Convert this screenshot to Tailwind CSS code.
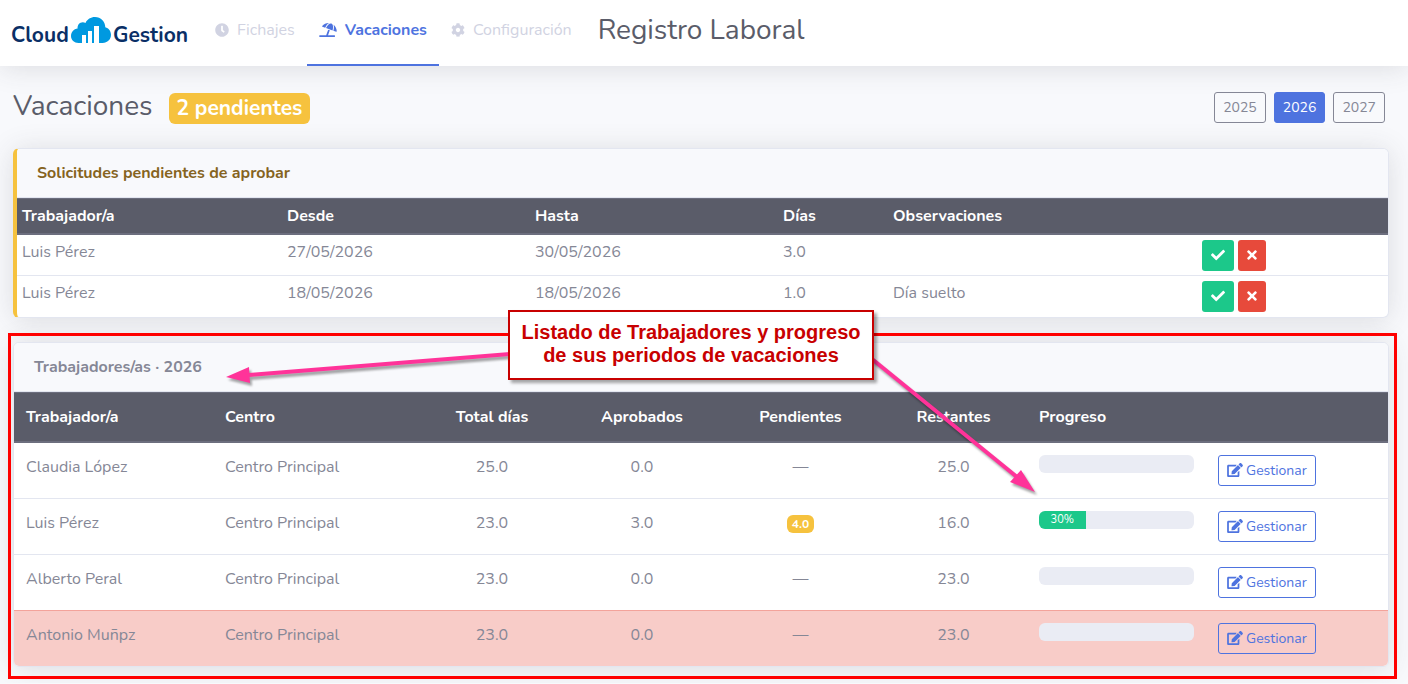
<!DOCTYPE html>
<html lang="es">
<head>
    <meta charset="UTF-8">
    <meta name="viewport" content="width=device-width, initial-scale=1.0">
    <title>Registro Laboral - Vacaciones</title>
    <script src="https://cdn.jsdelivr.net/npm/@tailwindcss/browser@4"></script>
</head>
<body class="bg-[#f8f9fc] text-[#858796] text-base font-[Nunito,Lato,sans-serif]">
    <!-- Icons -->
    <svg class="hidden">
        <symbol id="clock" viewBox="0 0 512 512"><path d="M256,8C119,8,8,119,8,256S119,504,256,504,504,393,504,256,393,8,256,8Zm92.49,313h0l-20,25a16,16,0,0,1-22.49,2.5h0l-67-49.72a40,40,0,0,1-15-31.23V112a16,16,0,0,1,16-16h32a16,16,0,0,1,16,16V256l58,42.5A16,16,0,0,1,348.49,321Z"/></symbol>
        <symbol id="beach" viewBox="0 0 640 512"><path d="M115.38 136.9l102.11 37.18c35.19-81.54 86.21-144.29 139-173.7-95.88-4.89-188.78 36.96-248.53 111.8-6.69 8.4-2.66 21.05 7.42 24.72zm132.25 48.16l238.48 86.83c35.76-121.38 18.7-231.66-42.63-253.98-7.4-2.7-15.13-4-23.09-4-58.02.01-128.27 69.17-172.76 171.15zM521.48 60.5c6.22 16.3 10.83 34.6 13.2 55.19 5.74 49.89-1.42 108.23-18.95 166.98l102.62 37.36c10.09 3.67 21.31-3.43 21.57-14.17 2.32-95.69-41.91-187.44-118.44-245.36zM560 447.98H321.06L386 269.5l-60.14-21.9-72.9 200.37H16c-8.84 0-16 7.16-16 16.01v32.01C0 504.83 7.16 512 16 512h544c8.84 0 16-7.17 16-16.01v-32.01c0-8.84-7.16-16-16-16z"/></symbol>
        <symbol id="cog" viewBox="0 0 512 512"><path d="M487.4 315.7l-42.6-24.6c4.3-23.2 4.3-47 0-70.2l42.6-24.6c4.9-2.8 7.1-8.6 5.5-14-11.1-35.6-30-67.8-54.7-94.6-3.8-4.1-10-5.1-14.8-2.3L380.8 110c-17.9-15.4-38.5-27.3-60.8-35.1V25.8c0-5.6-3.9-10.5-9.4-11.7-36.7-8.2-74.3-7.8-109.2 0-5.5 1.2-9.4 6.1-9.4 11.7V75c-22.2 7.9-42.8 19.8-60.8 35.1L88.7 85.5c-4.9-2.8-11-1.9-14.8 2.3-24.7 26.7-43.6 58.9-54.7 94.6-1.7 5.4.6 11.2 5.5 14L67.3 221c-4.3 23.2-4.3 47 0 70.2l-42.6 24.6c-4.9 2.8-7.1 8.6-5.5 14 11.1 35.6 30 67.8 54.7 94.6 3.8 4.1 10 5.1 14.8 2.3l42.6-24.6c17.9 15.4 38.5 27.3 60.8 35.1v49.2c0 5.6 3.9 10.5 9.4 11.7 36.7 8.2 74.3 7.8 109.2 0 5.5-1.2 9.4-6.1 9.4-11.7v-49.2c22.2-7.9 42.8-19.8 60.8-35.1l42.6 24.6c4.9 2.8 11 1.9 14.8-2.3 24.7-26.7 43.6-58.9 54.7-94.6 1.5-5.5-.7-11.3-5.6-14.1zM256 336c-44.1 0-80-35.9-80-80s35.9-80 80-80 80 35.9 80 80-35.9 80-80 80z"/></symbol>
        <symbol id="check" viewBox="0 0 512 512"><path d="M173.898 439.404l-166.4-166.4c-9.997-9.997-9.997-26.206 0-36.204l36.203-36.204c9.997-9.998 26.207-9.998 36.204 0L192 312.69 432.095 72.596c9.997-9.997 26.207-9.997 36.204 0l36.203 36.204c9.997 9.997 9.997 26.206 0 36.204l-294.4 294.401c-9.998 9.997-26.207 9.997-36.204-.001z"/></symbol>
        <symbol id="times" viewBox="0 0 352 512"><path d="M242.72 256l100.07-100.07c12.28-12.28 12.28-32.19 0-44.48l-22.24-22.24c-12.28-12.28-32.19-12.28-44.48 0L176 189.28 75.93 89.21c-12.28-12.28-32.19-12.28-44.48 0L9.21 111.45c-12.28 12.28-12.28 32.19 0 44.48L109.28 256 9.21 356.07c-12.28 12.28-12.28 32.19 0 44.48l22.24 22.24c12.28 12.28 32.2 12.28 44.48 0L176 322.72l100.07 100.07c12.28 12.28 32.2 12.28 44.48 0l22.24-22.24c12.28-12.28 12.28-32.19 0-44.48L242.72 256z"/></symbol>
        <symbol id="edit" viewBox="0 0 576 512"><path d="M402.6 83.2l90.2 90.2c3.8 3.8 3.8 10 0 13.8L274.4 405.6l-92.8 10.3c-12.4 1.4-22.9-9.1-21.5-21.5l10.3-92.8L388.8 83.2c3.8-3.8 10-3.8 13.8 0zm162-22.9l-48.8-48.8c-15.2-15.2-39.9-15.2-55.2 0l-35.4 35.4c-3.8 3.8-3.8 10 0 13.8l90.2 90.2c3.8 3.8 10 3.8 13.8 0l35.4-35.4c15.2-15.3 15.2-40 0-55.2zM384 346.2V448H64V128h229.8c3.2 0 6.2-1.3 8.5-3.5l40-40c7.6-7.6 2.2-20.5-8.5-20.5H48C21.5 64 0 85.5 0 112v352c0 26.5 21.5 48 48 48h352c26.5 0 48-21.5 48-48V306.2c0-10.7-12.9-16-20.5-8.5l-40 40c-2.2 2.3-3.5 5.3-3.5 8.5z"/></symbol>
    </svg>

    <header class="flex items-center bg-white pl-[11px] shadow-[0_2px_28px_rgba(58,59,69,0.15)]">
        <a href="#" class="flex items-center w-48 text-[#0a2f66] text-[21px] leading-6 font-bold">
            <span class="w-[60px] pt-1">Cloud</span>
            <svg class="w-10 h-[26px] mb-1.5" viewBox="0 0 40 26">
                <path fill="#0099e0" d="M7.500 26C3.300 26 0 22.900 0 19c0-3.900 2.800-6.900 6.600-7.400C6.200 8 8.600 5.200 11.800 5.200c1 0 1.900.2 2.700.7C16.200 2.300 19.800 0 24 0c5.800 0 10.200 4.400 10.300 10.300 3.400 1 5.700 3.900 5.700 7.500C40 22.500 36.400 26 31.600 26z"/>
                <path fill="#fff" d="M11 18h4v8h-4zM17 14h4v12h-4zM23 9h5v17h-5z"/>
            </svg>
            <span class="pl-0.5 pt-1">Gestion</span>
        </a>
        <nav class="flex">
            <a href="#" class="flex items-center gap-2 h-[66px] px-3 pb-1 border-b-2 border-transparent text-[#d1d3e2]">
                <svg class="w-[14px] h-[14px] fill-current"><use href="#clock"/></svg>Fichajes
            </a>
            <a href="#" class="flex items-center gap-2 h-[66px] px-3 pb-1 border-b-2 border-[#4e73df] text-[#4e73df] font-bold">
                <svg class="w-[18px] h-[14px] fill-current"><use href="#beach"/></svg>Vacaciones
            </a>
            <a href="#" class="flex items-center gap-2 h-[66px] px-3 pb-1 border-b-2 border-transparent text-[#d1d3e2]">
                <svg class="w-[14px] h-[14px] fill-current"><use href="#cog"/></svg>Configuración
            </a>
        </nav>
        <h1 class="pl-3.5 pb-1.5 text-[28px] leading-[34px] font-normal text-[#5a5c69]">Registro Laboral</h1>
    </header>

    <main class="pl-[13px] pr-[19px] pt-[26px] pb-4">
        <div class="flex items-start justify-between mb-6 pr-1">
            <h2 class="flex items-center gap-4 h-8 text-[28px] font-normal text-[#5a5c69]">
                <span class="pb-1">Vacaciones</span>
                <span class="bg-[#f6c23e] text-white text-[21px] leading-[31px] font-bold rounded-md px-2">2 pendientes</span>
            </h2>
            <div class="flex gap-2 text-sm">
                <button class="px-2 h-[31px] rounded-[3px] border border-[#858796]">2025</button>
                <button class="px-2 h-[31px] rounded-[3px] border border-[#4e73df] bg-[#4e73df] text-white">2026</button>
                <button class="px-2 h-[31px] rounded-[3px] border border-[#858796]">2027</button>
            </div>
        </div>

        <!-- Pending requests -->
        <section class="mb-6 bg-white rounded-md border border-[#e3e6f0] border-l-4 border-l-[#f6c23e] overflow-hidden shadow-[0_2px_28px_rgba(58,59,69,0.15)]">
            <h3 class="px-5 py-3 bg-[#f8f9fc] border-b border-[#e3e6f0] font-bold text-[#856320]">Solicitudes pendientes de aprobar</h3>
            <table class="w-full table-fixed border-separate border-spacing-0 text-left">
                <colgroup>
                    <col class="w-[265px]"><col class="w-[248px]"><col class="w-[248px]"><col class="w-[110px]"><col class="w-[309px]"><col class="w-[191px]">
                </colgroup>
                <thead class="bg-[#5a5c69] text-white">
                    <tr>
                        <th class="p-[5px] border-t border-b-2 border-[#6c6e7e]">Trabajador/a</th>
                        <th class="p-[5px] border-t border-b-2 border-[#6c6e7e]">Desde</th>
                        <th class="p-[5px] border-t border-b-2 border-[#6c6e7e]">Hasta</th>
                        <th class="p-[5px] border-t border-b-2 border-[#6c6e7e]">Días</th>
                        <th class="p-[5px] border-t border-b-2 border-[#6c6e7e]">Observaciones</th>
                        <th class="p-[5px] border-t border-b-2 border-[#6c6e7e]"></th>
                    </tr>
                </thead>
                <tbody class="align-top">
                    <tr class="h-[41px]">
                        <td class="px-[5px] pt-[5px] border-b border-[#e3e6f0]">Luis Pérez</td>
                        <td class="px-[5px] pt-[5px] border-b border-[#e3e6f0]">27/05/2026</td>
                        <td class="px-[5px] pt-[5px] border-b border-[#e3e6f0]">30/05/2026</td>
                        <td class="px-[5px] pt-[5px] border-b border-[#e3e6f0]">3.0</td>
                        <td class="px-[5px] pt-[5px] border-b border-[#e3e6f0]"></td>
                        <td class="px-[5px] pt-[5px] border-b border-[#e3e6f0]">
                            <div class="flex gap-1">
                                <button aria-label="Aprobar" class="flex items-center justify-center w-8 h-[31px] pb-0.5 rounded-[3px] bg-[#1cc88a] text-white"><svg class="w-[14px] h-[14px] fill-current"><use href="#check"/></svg></button>
                                <button aria-label="Rechazar" class="flex items-center justify-center w-7 h-[31px] pb-0.5 rounded-[3px] bg-[#e74a3b] text-white"><svg class="w-[10px] h-[14px] fill-current"><use href="#times"/></svg></button>
                            </div>
                        </td>
                    </tr>
                    <tr class="h-[41px]">
                        <td class="px-[5px] pt-[5px]">Luis Pérez</td>
                        <td class="px-[5px] pt-[5px]">18/05/2026</td>
                        <td class="px-[5px] pt-[5px]">18/05/2026</td>
                        <td class="px-[5px] pt-[5px]">1.0</td>
                        <td class="px-[5px] pt-[5px]">Día suelto</td>
                        <td class="px-[5px] pt-[5px]">
                            <div class="flex gap-1">
                                <button aria-label="Aprobar" class="flex items-center justify-center w-8 h-[31px] pb-0.5 rounded-[3px] bg-[#1cc88a] text-white"><svg class="w-[14px] h-[14px] fill-current"><use href="#check"/></svg></button>
                                <button aria-label="Rechazar" class="flex items-center justify-center w-7 h-[31px] pb-0.5 rounded-[3px] bg-[#e74a3b] text-white"><svg class="w-[10px] h-[14px] fill-current"><use href="#times"/></svg></button>
                            </div>
                        </td>
                    </tr>
                </tbody>
            </table>
        </section>

        <!-- Workers -->
        <section class="relative">
            <div class="bg-white rounded-md border border-[#e3e6f0] overflow-hidden shadow-[0_2px_28px_rgba(58,59,69,0.15)]">
                <h3 class="px-5 py-3 bg-[#f8f9fc] border-b border-[#e3e6f0] font-bold">Trabajadores/as · 2026</h3>
                <table class="w-full table-fixed border-separate border-spacing-0 text-center">
                    <colgroup>
                        <col class="w-[199px]"><col class="w-[208px]"><col class="w-[142px]"><col class="w-[158px]"><col class="w-[159px]"><col class="w-[147px]"><col class="w-[179px]"><col class="w-[182px]">
                    </colgroup>
                    <thead class="bg-[#5a5c69] text-white">
                        <tr>
                            <th class="p-3 border-t border-b-2 border-[#6c6e7e] text-left">Trabajador/a</th>
                            <th class="p-3 border-t border-b-2 border-[#6c6e7e] text-left">Centro</th>
                            <th class="p-3 border-t border-b-2 border-[#6c6e7e]">Total días</th>
                            <th class="p-3 border-t border-b-2 border-[#6c6e7e]">Aprobados</th>
                            <th class="p-3 border-t border-b-2 border-[#6c6e7e]">Pendientes</th>
                            <th class="p-3 border-t border-b-2 border-[#6c6e7e]">Restantes</th>
                            <th class="p-3 border-t border-b-2 border-[#6c6e7e] text-left">Progreso</th>
                            <th class="p-3 border-t border-b-2 border-[#6c6e7e]"></th>
                        </tr>
                    </thead>
                    <tbody class="align-top">
                        <tr>
                            <td class="p-3 border-b border-[#e3e6f0] text-left">Claudia López</td>
                            <td class="p-3 border-b border-[#e3e6f0] text-left">Centro Principal</td>
                            <td class="p-3 border-b border-[#e3e6f0]">25.0</td>
                            <td class="p-3 border-b border-[#e3e6f0]">0.0</td>
                            <td class="p-3 border-b border-[#e3e6f0]">—</td>
                            <td class="p-3 border-b border-[#e3e6f0]">25.0</td>
                            <td class="p-3 border-b border-[#e3e6f0]"><div class="h-[18px] rounded-md bg-[#eaecf4]"></div></td>
                            <td class="p-3 border-b border-[#e3e6f0]"><button class="flex items-center gap-[3px] px-2 h-[31px] rounded-[3px] border border-[#4e73df] text-[#4e73df] text-sm"><svg class="w-4 h-[14px] mb-0.5 fill-current"><use href="#edit"/></svg>Gestionar</button></td>
                        </tr>
                        <tr>
                            <td class="p-3 border-b border-[#e3e6f0] text-left">Luis Pérez</td>
                            <td class="p-3 border-b border-[#e3e6f0] text-left">Centro Principal</td>
                            <td class="p-3 border-b border-[#e3e6f0]">23.0</td>
                            <td class="p-3 border-b border-[#e3e6f0]">3.0</td>
                            <td class="p-3 border-b border-[#e3e6f0]"><span class="inline-block px-[5px] rounded-md bg-[#f6c23e] text-white text-xs leading-[18px] font-bold">4.0</span></td>
                            <td class="p-3 border-b border-[#e3e6f0]">16.0</td>
                            <td class="p-3 border-b border-[#e3e6f0]">
                                <div class="h-[18px] rounded-md bg-[#eaecf4] overflow-hidden">
                                    <div class="h-full bg-[#1cc88a] text-white text-[11px] leading-[17px]" style="width: 30%">30%</div>
                                </div>
                            </td>
                            <td class="p-3 border-b border-[#e3e6f0]"><button class="flex items-center gap-[3px] px-2 h-[31px] rounded-[3px] border border-[#4e73df] text-[#4e73df] text-sm"><svg class="w-4 h-[14px] mb-0.5 fill-current"><use href="#edit"/></svg>Gestionar</button></td>
                        </tr>
                        <tr>
                            <td class="p-3 border-b border-[#f3a39b] text-left">Alberto Peral</td>
                            <td class="p-3 border-b border-[#f3a39b] text-left">Centro Principal</td>
                            <td class="p-3 border-b border-[#f3a39b]">23.0</td>
                            <td class="p-3 border-b border-[#f3a39b]">0.0</td>
                            <td class="p-3 border-b border-[#f3a39b]">—</td>
                            <td class="p-3 border-b border-[#f3a39b]">23.0</td>
                            <td class="p-3 border-b border-[#f3a39b]"><div class="h-[18px] rounded-md bg-[#eaecf4]"></div></td>
                            <td class="p-3 border-b border-[#f3a39b]"><button class="flex items-center gap-[3px] px-2 h-[31px] rounded-[3px] border border-[#4e73df] text-[#4e73df] text-sm"><svg class="w-4 h-[14px] mb-0.5 fill-current"><use href="#edit"/></svg>Gestionar</button></td>
                        </tr>
                        <tr class="bg-[#f8ccc8]">
                            <td class="p-3 text-left">Antonio Muñpz</td>
                            <td class="p-3 text-left">Centro Principal</td>
                            <td class="p-3">23.0</td>
                            <td class="p-3">0.0</td>
                            <td class="p-3">—</td>
                            <td class="p-3">23.0</td>
                            <td class="p-3"><div class="h-[18px] rounded-md bg-[#eaecf4]"></div></td>
                            <td class="p-3"><button class="flex items-center gap-[3px] px-2 h-[31px] rounded-[3px] border border-[#4e73df] text-[#4e73df] text-sm"><svg class="w-4 h-[14px] mb-0.5 fill-current"><use href="#edit"/></svg>Gestionar</button></td>
                        </tr>
                    </tbody>
                </table>
            </div>

            <!-- Help notes over the table -->
            <div class="absolute -left-[5px] -right-2 -top-[9px] -bottom-3 border-3 border-[#ff0000] pointer-events-none"></div>
            <svg class="absolute left-0 top-0 w-full h-full overflow-visible pointer-events-none drop-shadow-[2px_3px_1px_rgba(0,0,0,0.35)]" fill="#ff3399" stroke="#ff3399">
                <path stroke-width="4" d="M497 12L236 33M859 17L1004 135"/>
                <path stroke="none" d="M213 35L236 25L237 41ZM1022 150L1008 128L997 140Z"/>
            </svg>
            <div class="absolute left-[495px] -top-8 w-[366px] h-[70px] pt-[9px] bg-white border-2 border-[#c80000] text-[#c80000] text-center text-xl leading-[23px] font-bold font-[Arial,'Liberation_Sans',sans-serif] shadow-[3px_3px_3px_rgba(0,0,0,0.35)]">
                Listado de Trabajadores y progreso<br>de sus periodos de vacaciones
            </div>
        </section>
    </main>
</body>
</html>
